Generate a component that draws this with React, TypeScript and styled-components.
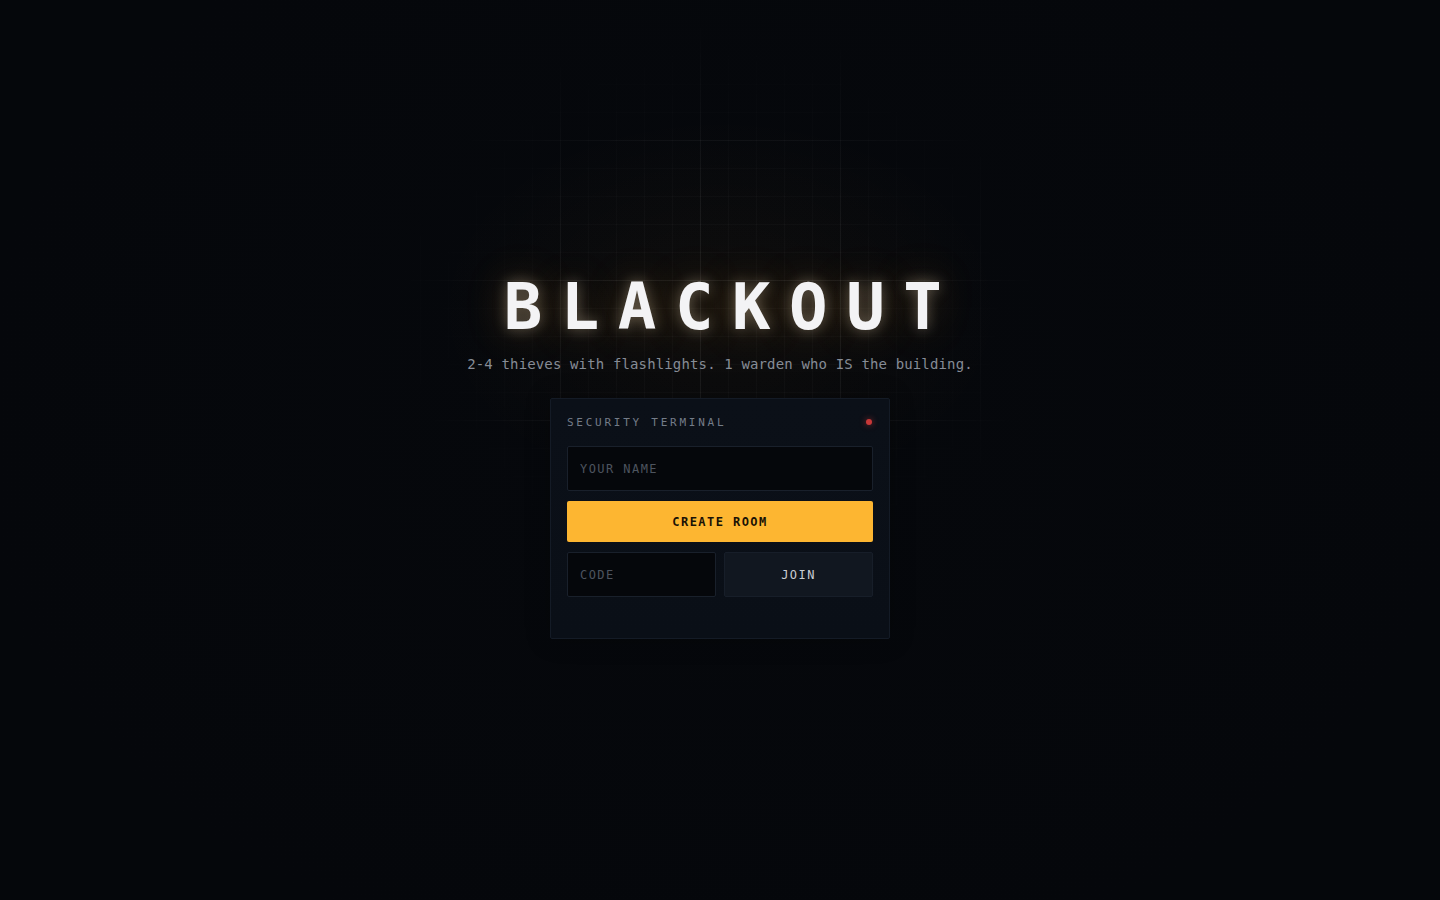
import React from 'react'
import styled, {createGlobalStyle} from 'styled-components'

const mono = `'DejaVu Sans Mono', 'Liberation Mono', monospace`

const GlobalStyle = createGlobalStyle`
  html, body {
    margin: 0;
    padding: 0;
    background: #05070b;
  }
  * {
    box-sizing: border-box;
  }
`

const Page = styled.main`
  position: relative;
  min-height: 100vh;
  overflow: hidden;
  background:
    radial-gradient(ellipse 380px 260px at 720px 310px, rgba(255, 170, 40, 0.04), transparent 75%),
    radial-gradient(ellipse 800px 600px at 720px 420px, #06080c, #05070b 95%);
  font-family: ${mono};
`

// faint blueprint grid, faded out toward the edges
const Grid = styled.div`
  position: absolute;
  inset: 0;
  pointer-events: none;
  background-image:
    linear-gradient(rgba(255, 255, 255, 0.04) 1px, transparent 1px),
    linear-gradient(90deg, rgba(255, 255, 255, 0.04) 1px, transparent 1px),
    linear-gradient(rgba(255, 255, 255, 0.022) 1px, transparent 1px),
    linear-gradient(90deg, rgba(255, 255, 255, 0.022) 1px, transparent 1px);
  background-size: 140px 140px, 140px 140px, 28px 28px, 28px 28px;
  -webkit-mask-image: radial-gradient(ellipse 330px 300px at 720px 310px, #000 35%, transparent 100%);
  mask-image: radial-gradient(ellipse 330px 300px at 720px 310px, #000 35%, transparent 100%);
`

const Column = styled.div`
  position: relative;
  display: flex;
  flex-direction: column;
  align-items: center;
  padding-top: 271px;
`

const Title = styled.h1`
  margin: 0;
  padding-left: 24px;
  font-family: ${mono};
  font-weight: 700;
  font-size: 64px;
  line-height: 72px;
  letter-spacing: 0.29em;
  color: #f3f3f5;
  text-shadow:
    0 0 14px rgba(255, 236, 200, 0.35),
    0 0 40px rgba(255, 170, 50, 0.25);
`

const Tagline = styled.p`
  margin: 11px 0 0;
  font-size: 14px;
  line-height: 20px;
  letter-spacing: 0.01em;
  color: #868c96;
`

const Terminal = styled.section`
  width: 340px;
  margin-top: 24px;
  padding: 16px 16px 41px;
  background: linear-gradient(180deg, #0b1018 0%, #0a0f17 100%);
  border: 1px solid #141b26;
  border-radius: 2px;
  box-shadow: 0 0 24px rgba(0, 0, 0, 0.25);
`

const TerminalHead = styled.div`
  display: flex;
  align-items: center;
  justify-content: space-between;
  height: 14px;
  margin-bottom: 17px;
`

const TerminalLabel = styled.span`
  font-size: 11px;
  letter-spacing: 0.25em;
  color: #747c88;
`

const StatusDot = styled.span`
  width: 6px;
  height: 6px;
  margin-right: 1px;
  border-radius: 50%;
  background: #c93838;
  box-shadow: 0 0 6px rgba(230, 60, 60, 0.6);
`

const Stack = styled.div`
  display: flex;
  flex-direction: column;
  gap: 10px;
`

const Field = styled.input`
  width: 100%;
  height: 45px;
  padding: 0 12px;
  background: #05070b;
  border: 1px solid #19202b;
  border-radius: 2px;
  outline: none;
  font-family: ${mono};
  font-size: 12px;
  letter-spacing: 0.12em;
  color: #c8ccd3;

  &::placeholder {
    color: #4d545f;
  }
`

const PrimaryButton = styled.button`
  height: 41px;
  border: none;
  border-radius: 2px;
  background: #fdb631;
  font-family: ${mono};
  font-weight: 700;
  font-size: 12px;
  letter-spacing: 0.12em;
  color: #1a1205;
  cursor: pointer;
`

const JoinRow = styled.div`
  display: grid;
  grid-template-columns: 1fr 1fr;
  gap: 8px;
`

const SecondaryButton = styled.button`
  height: 45px;
  padding-bottom: 1px;
  border: 1px solid #171e29;
  border-radius: 2px;
  background: #111720;
  font-family: ${mono};
  font-size: 12px;
  letter-spacing: 0.12em;
  color: #c9cdd4;
  cursor: pointer;
`

export default function App() {
  return (
    <>
      <GlobalStyle />
      <Page>
        <Grid />
        <Column>
          <Title>BLACKOUT</Title>
          <Tagline>2-4 thieves with flashlights. 1 warden who IS the building.</Tagline>
          <Terminal>
            <TerminalHead>
              <TerminalLabel>SECURITY TERMINAL</TerminalLabel>
              <StatusDot />
            </TerminalHead>
            <Stack>
              <Field placeholder="YOUR NAME" />
              <PrimaryButton>CREATE ROOM</PrimaryButton>
              <JoinRow>
                <Field placeholder="CODE" />
                <SecondaryButton>JOIN</SecondaryButton>
              </JoinRow>
            </Stack>
          </Terminal>
        </Column>
      </Page>
    </>
  )
}
